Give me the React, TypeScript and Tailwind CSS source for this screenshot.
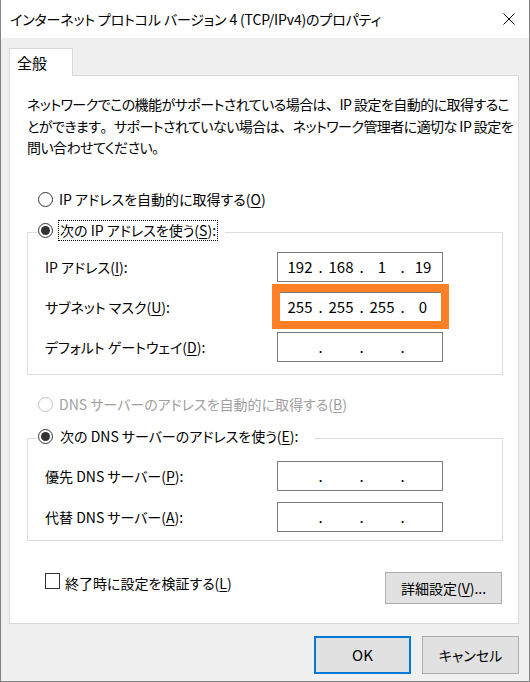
import React, { Fragment } from "react";

const U = ({ c }: { c: string }) => (
  <span className="underline underline-offset-[2px] decoration-[1px]">{c}</span>
);

const P = ({ c }: { c: string }) => (
  <span className="[font-feature-settings:normal]">{c}</span>
);

function Radio({ checked, disabled }: { checked?: boolean; disabled?: boolean }) {
  return (
    <span
      className={
        disabled
          ? "w-[15px] h-[15px] rounded-full border border-[#c4c4c4] bg-white shrink-0 flex items-center justify-center"
          : "w-[15px] h-[15px] rounded-full border border-[#333333] bg-white shrink-0 flex items-center justify-center"
      }
    >
      {checked && <span className="w-[9px] h-[9px] rounded-full bg-[#333333]" />}
    </span>
  );
}

function IpBox({ v }: { v: string[] }) {
  return (
    <div className="w-[166px] h-[30px] border border-[#7a7a7a] bg-white flex items-center pl-[4px] text-[15px] leading-[20px] shrink-0">
      {v.map((x, i) => (
        <Fragment key={i}>
          {i > 0 && <span className="w-[5px] text-center">.</span>}
          <span className="w-[36px] text-center">{x}</span>
        </Fragment>
      ))}
    </div>
  );
}

export default function App() {
  return (
    <div className="w-[530px] h-[682px] bg-[#f0f0f0] border-l border-r border-b border-[#838383] flex flex-col text-black text-[14px] font-['Noto_Sans_CJK_JP',sans-serif] [font-feature-settings:'palt'] overflow-hidden">
      {/* Title bar */}
      <div className="h-[38px] bg-white flex items-center justify-between pl-[9px] pr-[14px] shrink-0">
        <span className="leading-[20px] whitespace-nowrap tracking-[-0.15px]">
          インターネット プロトコル バージョン 4 (TCP/IPv4)のプロパティ
        </span>
        <svg width="12" height="12" viewBox="0 0 12 12" className="shrink-0">
          <path d="M0.5 0.5 L11.5 11.5 M11.5 0.5 L0.5 11.5" stroke="#000" strokeWidth="1" />
        </svg>
      </div>

      {/* Body */}
      <div className="flex-1 flex flex-col pl-[8px] pr-[10px] pt-[10px]">
        {/* Tab */}
        <div className="w-[64px] h-[28px] bg-white border border-b-0 border-[#d9d9d9] mb-[-1px] relative z-10 flex items-center pl-[7px] leading-[20px] text-[15px]">
          全般
        </div>

        {/* Panel */}
        <div className="w-[510px] h-[549px] bg-white border border-[#d9d9d9] flex flex-col shrink-0">
          <p className="pt-[18px] pl-[17px] leading-[21.5px] whitespace-nowrap tracking-[-0.55px]">
            ネットワークでこの機能がサポートされている場合は<P c="、" />IP 設定を自動的に取得するこ
            <br />
            とができます<P c="。" />サポートされていない場合は<P c="、" />ネットワーク管理者に適切な IP 設定を
            <br />
            問い合わせてください<P c="。" />
          </p>

          {/* Radio 1 */}
          <div className="mt-[30px] h-[21px] flex items-center pl-[28px] leading-[20px]">
            <Radio />
            <span className="ml-[6px] whitespace-nowrap">
              IP アドレスを自動的に取得する(<U c="O" />)
            </span>
          </div>

          {/* Groupbox 1 */}
          <fieldset className="mt-[10.5px] ml-[17px] w-[476px] border border-[#dcdcdc]">
            <legend className="ml-[9px] pl-[1px] pr-[7px] pb-[3px]">
              <span className="flex items-center h-[21px]">
                <Radio checked />
                <span className="ml-[5px] h-[21px] px-[1px] border border-dotted border-black leading-[19px] whitespace-nowrap">
                  次の IP アドレスを使う(<U c="S" />):
                </span>
              </span>
            </legend>
            <div className="flex flex-col gap-[10px] pl-[17px] pt-[8px] pb-[12px]">
              <div className="flex items-center">
                <span className="w-[232px] whitespace-nowrap leading-[20px]">
                  IP アドレス(<U c="I" />):
                </span>
                <IpBox v={["192", "168", "1", "19"]} />
              </div>
              <div className="flex items-center">
                <span className="w-[232px] whitespace-nowrap leading-[20px]">
                  サブネット マスク(<U c="U" />):
                </span>
                <div className="relative">
                  <IpBox v={["255", "255", "255", "0"]} />
                  <div className="absolute left-[-5px] top-[-8px] w-[177px] h-[45px] border-[8px] border-[#ff7f27]" />
                </div>
              </div>
              <div className="flex items-center">
                <span className="w-[232px] whitespace-nowrap leading-[20px]">
                  デフォルト ゲートウェイ(<U c="D" />):
                </span>
                <IpBox v={["", "", "", ""]} />
              </div>
            </div>
          </fieldset>

          {/* Radio 3 disabled */}
          <div className="mt-[18.5px] h-[21px] flex items-center pl-[28px] leading-[20px] text-[#a0a0a0]">
            <Radio disabled />
            <span className="ml-[6px] whitespace-nowrap">
              DNS サーバーのアドレスを自動的に取得する(<U c="B" />)
            </span>
          </div>

          {/* Groupbox 2 */}
          <fieldset className="mt-[11.5px] ml-[17px] w-[476px] border border-[#dcdcdc]">
            <legend className="ml-[9px] pl-[1px] pr-[14px] pb-[3px]">
              <span className="flex items-center h-[21px]">
                <Radio checked />
                <span className="ml-[5px] h-[21px] px-[1px] border border-transparent leading-[19px] whitespace-nowrap">
                  次の DNS サーバーのアドレスを使う(<U c="E" />):
                </span>
              </span>
            </legend>
            <div className="flex flex-col gap-[11px] pl-[17px] pt-[11px] pb-[8px]">
              <div className="flex items-center">
                <span className="w-[232px] whitespace-nowrap leading-[20px]">
                  優先 DNS サーバー(<U c="P" />):
                </span>
                <IpBox v={["", "", "", ""]} />
              </div>
              <div className="flex items-center">
                <span className="w-[232px] whitespace-nowrap leading-[20px]">
                  代替 DNS サーバー(<U c="A" />):
                </span>
                <IpBox v={["", "", "", ""]} />
              </div>
            </div>
          </fieldset>

          {/* Checkbox + advanced */}
          <div className="mt-[31px] flex items-start justify-between pl-[35px] pr-[16px]">
            <div className="flex items-center h-[18px]">
              <span className="w-[15px] h-[16px] border border-[#333333] bg-white shrink-0" />
              <span className="ml-[5px] whitespace-nowrap leading-[20px] mt-[3px]">
                終了時に設定を検証する(<U c="L" />)
              </span>
            </div>
            <button className="w-[117px] h-[32px] bg-[#e1e1e1] border border-[#adadad] flex items-center justify-center leading-[20px] whitespace-nowrap">
              詳細設定(<U c="V" />)...
            </button>
          </div>
        </div>

        {/* Buttons */}
        <div className="mt-[12px] flex justify-end gap-[11px]">
          <button className="w-[97px] h-[38px] bg-[#e1e1e1] border-2 border-[#0078d7] flex items-center justify-center leading-[20px] text-[15px]">
            OK
          </button>
          <button className="w-[97px] h-[38px] bg-[#e1e1e1] border border-[#adadad] flex items-center justify-center leading-[20px]">
            キャンセル
          </button>
        </div>
      </div>
    </div>
  );
}
